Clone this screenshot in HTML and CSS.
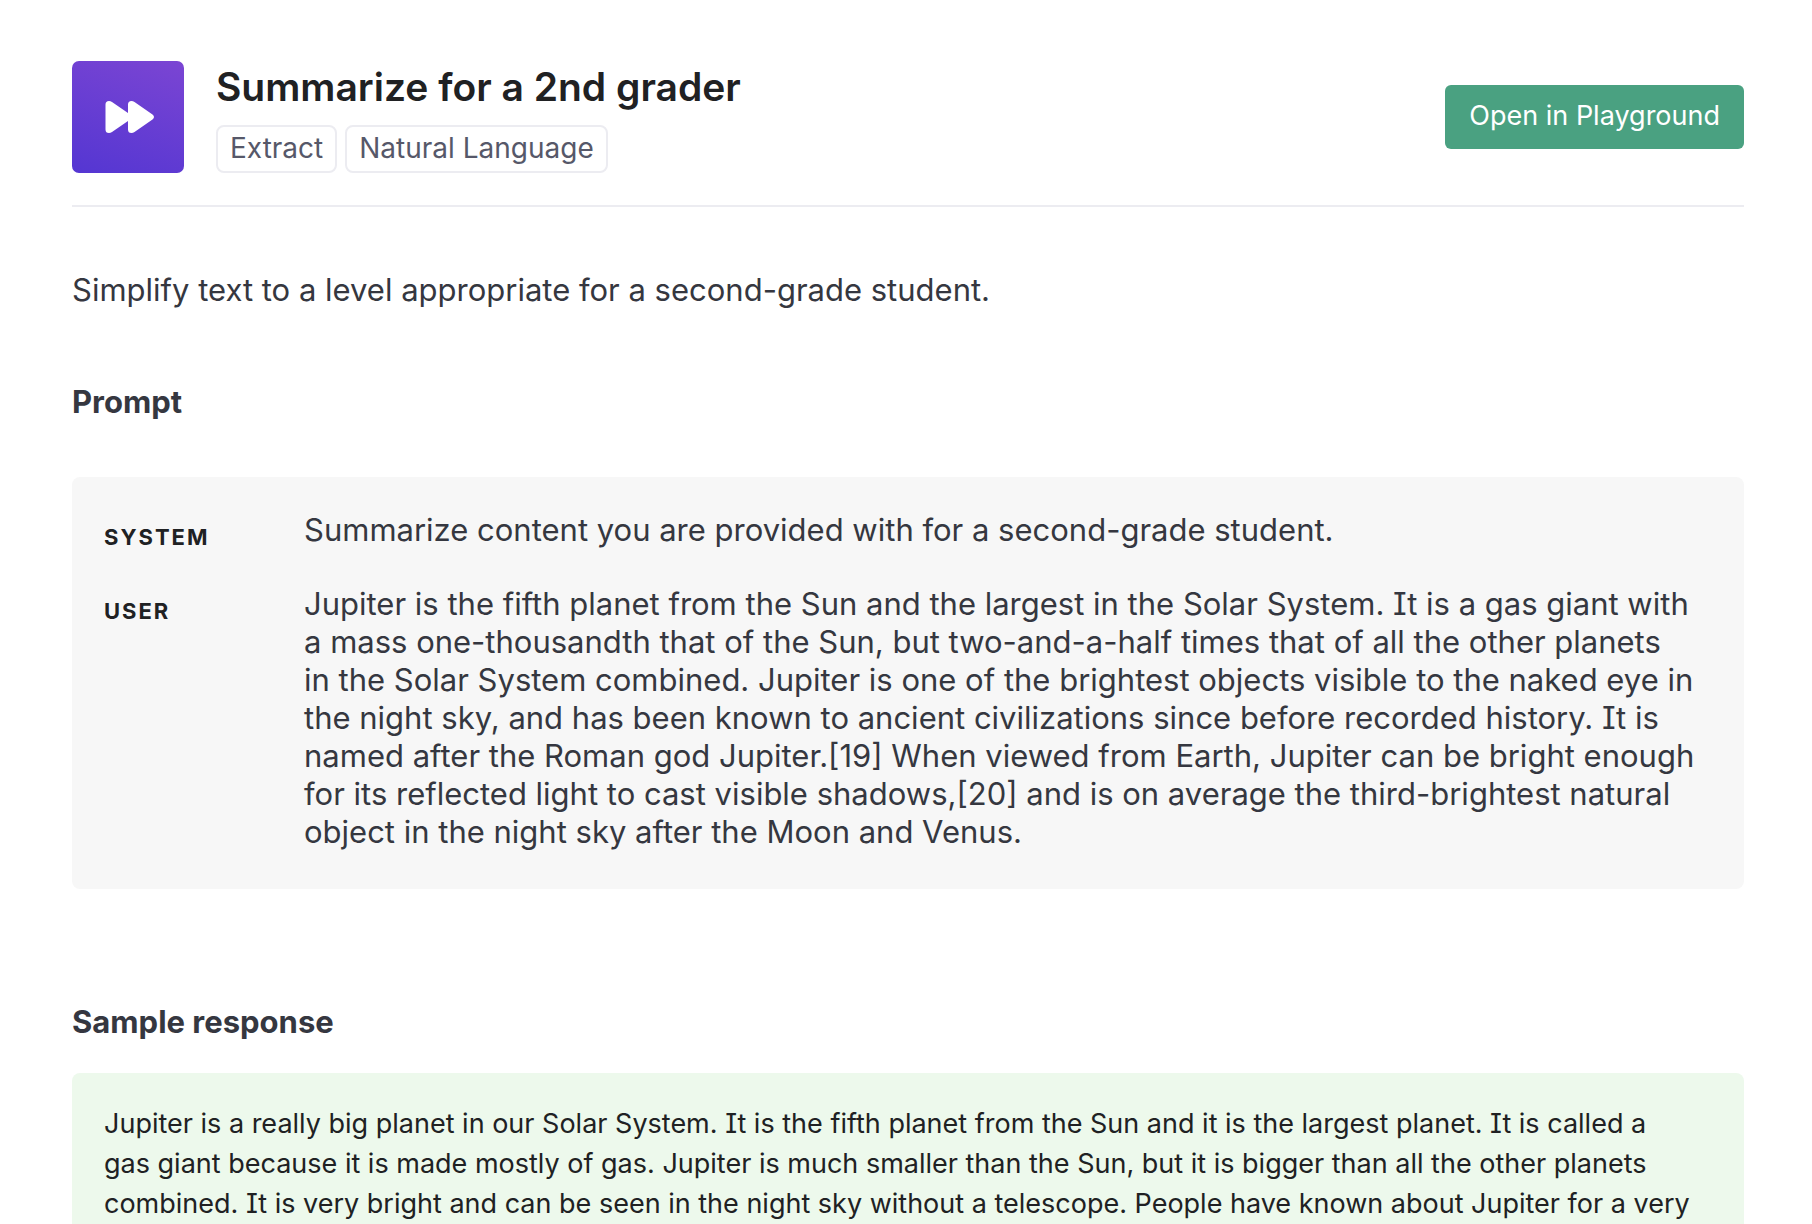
FILE: index.html
```html
<!DOCTYPE html>
<html lang="en">
<head>
<meta charset="utf-8">
<meta name="viewport" content="width=device-width, initial-scale=1">
<title>Summarize for a 2nd grader</title>
<link rel="stylesheet" href="styles.css">
</head>
<body>
<main class="example">
  <header class="example-header">
    <div class="example-icon">
      <svg width="112" height="112" viewBox="0 0 112 112" aria-hidden="true">
        <path fill="#fff" d="M33.500 43.500Q33.500 40 37 40Q38.500 40 40 41L56 52V43.500Q56 40 59.500 40Q61 40 62.500 41L80.500 53.500Q83.500 56 80.500 58.500L62.500 71Q61 72 59.500 72Q56 72 56 68.500V60L40 71Q38.500 72 37 72Q33.500 72 33.500 68.500Z"/>
      </svg>
    </div>
    <div class="example-heading">
      <h1 class="example-title">Summarize for a 2nd grader</h1>
      <ul class="tags">
        <li class="tag">Extract</li>
        <li class="tag">Natural Language</li>
      </ul>
    </div>
    <button type="button" class="playground-button">Open in Playground</button>
  </header>
  <p class="description">Simplify text to a level appropriate for a second-grade student.</p>
  <section class="prompt">
    <h2 class="section-title">Prompt</h2>
    <dl class="messages">
      <dt class="role">System</dt>
      <dd class="message">Summarize content you are provided with for a second-grade student.</dd>
      <dt class="role">User</dt>
      <dd class="message">Jupiter is the fifth planet from the Sun and the largest in the Solar System. It is a gas giant with<br>a mass one-thousandth that of the Sun, but two-and-a-half times that of all the other planets<br>in the Solar System combined. Jupiter is one of the brightest objects visible to the naked eye in<br>the night sky, and has been known to ancient civilizations since before recorded history. It is<br>named after the Roman god Jupiter.[19] When viewed from Earth, Jupiter can be bright enough<br>for its reflected light to cast visible shadows,[20] and is on average the third-brightest natural<br>object in the night sky after the Moon and Venus.</dd>
    </dl>
  </section>
  <section class="sample">
    <h2 class="section-title">Sample response</h2>
    <p class="response">Jupiter is a really big planet in our Solar System. It is the fifth planet from the Sun and it is the largest planet. It is called a<br>gas giant because it is made mostly of gas. Jupiter is much smaller than the Sun, but it is bigger than all the other planets<br>combined. It is very bright and can be seen in the night sky without a telescope. People have known about Jupiter for a very</p>
  </section>
</main>
</body>
</html>
```
FILE: styles.css
```css
* {
  box-sizing: border-box;
}

body {
  margin: 0;
  background: #fff;
  color: #353740;
  font-family: Inter, "Liberation Sans", sans-serif;
  font-size: 31px;
  line-height: 38px;
  font-feature-settings: "cv08";
}

h1, h2, p, ul, dl, dd {
  margin: 0;
  padding: 0;
}

.example {
  padding: 61px 68px 0 72px;
}

.example-header {
  display: flex;
  align-items: center;
  gap: 32px;
  padding-bottom: 32px;
  border-bottom: 2px solid #ececf1;
}

.example-icon {
  width: 112px;
  height: 112px;
  border-radius: 7px;
  background: linear-gradient(200deg, #7b45d3, #5436d2);
}

.example-icon svg {
  display: block;
}

.example-heading {
  flex: 1;
  display: flex;
  flex-direction: column;
  gap: 12px;
}

.example-title {
  color: #202123;
  font-size: 39px;
  font-weight: 600;
  line-height: 52px;
}

.tags {
  display: flex;
  gap: 8px;
  list-style: none;
}

.tag {
  padding: 0 12px 2px;
  border: 2px solid #ececf1;
  border-radius: 8px;
  color: #565869;
  font-size: 28px;
  line-height: 42px;
}

.playground-button {
  padding: 0 24px 2px;
  border: 0;
  border-radius: 6px;
  background: #4aa181;
  color: #fff;
  font: inherit;
  font-size: 27px;
  line-height: 62px;
}

.description {
  margin-top: 64px;
}

.section-title {
  font-size: 31px;
  font-weight: 700;
  line-height: 38px;
}

.prompt {
  margin-top: 74px;
}

.messages {
  display: grid;
  grid-template-columns: 168px 1fr;
  column-gap: 32px;
  row-gap: 29px;
  margin-top: 56px;
  padding: 34px 32px 38px;
  border-radius: 8px;
  background: #f7f7f7;
}

.role {
  padding-top: 7px;
  color: #202123;
  font-size: 22px;
  font-weight: 700;
  letter-spacing: 2px;
  text-transform: uppercase;
}

.sample {
  margin-top: 114px;
}

.response {
  margin-top: 32px;
  padding: 31px 32px;
  border-radius: 8px;
  background: #edf9ec;
  color: #202123;
  font-size: 27px;
  line-height: 40px;
}
```
